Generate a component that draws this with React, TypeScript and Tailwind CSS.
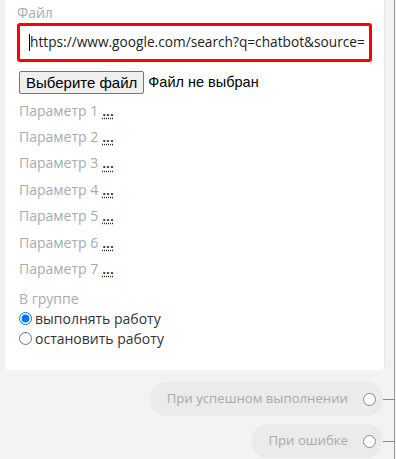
import React from "react";

const params = [1, 2, 3, 4, 5, 6, 7];

const Exit = ({ label }: { label: string }) => (
  <div className="relative flex items-center">
    <div className="flex items-center h-[34px] rounded-full bg-[#ebebeb] pl-[17px] pr-[7px]">
      <span className="text-[13.2px] text-[#a9a9a9]">{label}</span>
      <span className="ml-[15px] w-[13px] h-[13px] rounded-full bg-white border border-[#8a8a8a]" />
    </div>
    {/* connector to the side rail */}
    <div className="absolute left-full top-1/2 w-[12px] h-px bg-[#8a8a8a]" />
  </div>
);

export default function App() {
  return (
    <div
      className="relative w-[396px] h-[459px] bg-[#f3f3f3] overflow-hidden"
      style={{ fontFamily: '"Open Sans", "Noto Sans", sans-serif' }}
    >
      <div className="absolute top-0 bottom-0 left-[394px] w-px bg-[#9a9a9a]" />

      <div className="ml-[5px] w-[380px] h-[370px] bg-white rounded-b-[4px] border-r border-[#e6e6e6] px-[12px] pt-[3px]">
        <div className="text-[14px] leading-[20px] text-[#a3acb4]">Файл</div>

        <div className="h-[39px] border-[3px] border-[#f00] rounded-[3px] flex items-center pl-[9px] pr-[2px] whitespace-nowrap">
          <span className="inline-block w-px h-[17px] bg-black" />
          <span className="text-[13.7px] text-[#222]">https://www.google.com/search?q=chatbot&amp;source=</span>
        </div>

        <div className="mt-[9px] flex items-center gap-[4px]" style={{ fontFamily: '"Liberation Sans", Arial, sans-serif' }}>
          <button className="h-[23px] px-[6px] bg-[#efefef] border border-[#767676] rounded-[2px] text-[15px] leading-none text-black ml-[2px]">
            Выберите файл
          </button>
          <span className="text-[14.5px] text-black">Файл не выбран</span>
        </div>

        <div className="mt-[3px] pl-[2px]">
          {params.map((n) => (
            <div key={n} className="h-[26.4px] flex items-center text-[14px] text-[#a3acb4]">
              Параметр {n}
              <span className="ml-[4px] text-[#222] font-semibold underline decoration-dotted decoration-[#222] underline-offset-[2px]">...</span>
            </div>
          ))}
        </div>

        <div className="mt-[7px] pl-[2px] text-[14px] leading-[20px] text-[#a3acb4]">В группе</div>
        <label className="flex items-center gap-[3px] pl-[2px] h-[20px] text-[14px] text-[#333]">
          <input type="radio" name="g" defaultChecked className="m-0 w-[13px] h-[13px]" />
          выполнять работу
        </label>
        <label className="flex items-center gap-[3px] pl-[2px] h-[20px] text-[14px] text-[#333]">
          <input type="radio" name="g" className="m-0 w-[13px] h-[13px]" />
          остановить работу
        </label>
      </div>

      <div className="mt-[12px] pr-[13px] flex flex-col items-end gap-[8px]">
        <Exit label="При успешном выполнении" />
        <Exit label="При ошибке" />
      </div>
    </div>
  );
}
